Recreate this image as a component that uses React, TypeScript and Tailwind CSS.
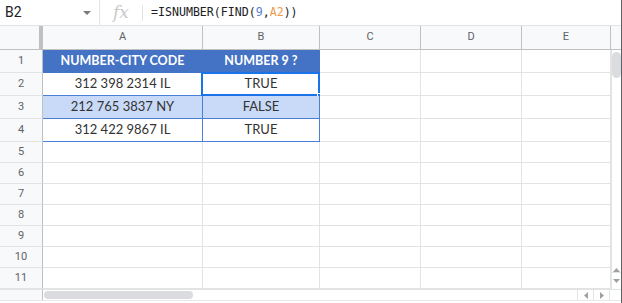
import React from "react";

const cols = [
  { key: "A", w: "w-[160px]" },
  { key: "B", w: "w-[117px]" },
  { key: "C", w: "w-[101px]" },
  { key: "D", w: "w-[101px]" },
  { key: "E", w: "w-[89px]" },
];

const data: Record<number, string[]> = {
  1: ["NUMBER-CITY CODE", "NUMBER 9 ?"],
  2: ["312 398 2314 IL", "TRUE"],
  3: ["212 765 3837 NY", "FALSE"],
  4: ["312 422 9867 IL", "TRUE"],
};

function Row({ n }: { n: number }) {
  const tall = n <= 4;
  const h = tall ? "h-[23px]" : "h-[21px]";
  const vals = data[n] || [];
  return (
    <div className={`flex ${h}`}>
      <div className="w-[43px] shrink-0 border-r border-b border-r-[#c0c0c0] border-b-[#e2e3e3] bg-[#f8f9fa] flex items-center justify-center text-[11px] text-[#5f6368]">
        {n}
      </div>
      {cols.map((c, i) => {
        let cls = "border-r border-b border-[#e2e3e3] bg-white";
        let txt = "";
        if (n === 1 && i < 2) {
          cls = "border-r border-b border-[#4472c4] bg-[#4472c4] text-white font-bold text-[12.5px]";
        } else if (n >= 2 && n <= 4 && i < 2) {
          cls = `border-r border-b border-[#4a7fd8] text-[#333333] text-[13px] ${n === 3 ? "bg-[#c9daf8]" : "bg-white"}`;
        }
        if (i < 2) txt = vals[i] || "";
        return (
          <div
            key={c.key}
            className={`${c.w} shrink-0 relative flex items-center justify-center font-['Lato',sans-serif] ${cls}`}
          >
            {txt}
            {n === 2 && i === 1 && (
              <>
                <div className="absolute left-[-2px] top-[-1px] right-[-1px] bottom-[-1px] border-2 border-[#1a73e8] pointer-events-none" />
                <div className="absolute right-[-4px] bottom-[-4px] w-[6px] h-[6px] bg-[#1a73e8] border border-white" />
              </>
            )}
          </div>
        );
      })}
    </div>
  );
}

export default function App() {
  const rows = [1, 2, 3, 4, 5, 6, 7, 8, 9, 10, 11];
  return (
    <div className="w-[622px] h-[303px] overflow-hidden bg-white font-['Roboto',sans-serif] border-r border-[#5f6368] flex flex-col">
      {/* formula bar */}
      <div className="h-[26px] flex items-center border-b border-[#e2e3e3] shrink-0">
        <div className="w-[100px] h-full flex items-center justify-between pl-[5px] pr-[8px] border-r border-[#e2e3e3] text-[14px] text-[#202124]">
          <span>B2</span>
          <svg width="8" height="4" viewBox="0 0 8 4"><path d="M0 0h8L4 4z" fill="#7a7a7a" /></svg>
        </div>
        <div className="w-[42px] h-full flex items-center justify-center">
          <span className="font-['DejaVu_Serif',serif] italic text-[17px] text-[#c8c8c8]">fx</span>
        </div>
        <div className="w-px h-[16px] bg-[#e2e3e3]" />
        <div className="pl-[8px] text-[11.6px] font-['DejaVu_Sans_Mono',monospace] text-[#202124]">
          =ISNUMBER(FIND(<span className="text-[#5b7fd4]">9</span>,<span className="text-[#f09a4a]">A2</span>))
        </div>
      </div>
      {/* column header */}
      <div className="h-[24px] flex shrink-0 bg-[#f8f9fa] border-b border-[#c0c0c0]">
        <div className="w-[43px] shrink-0 border-r-[4px] border-[#c0c0c0]" />
        {cols.map((c) => (
          <div key={c.key} className={`${c.w} shrink-0 border-r border-[#c0c0c0] flex items-center justify-center text-[11px] text-[#5f6368]`}>
            {c.key}
          </div>
        ))}
        <div className="flex-1" />
      </div>
      {/* body */}
      <div className="flex shrink-0">
        <div className="flex flex-col">
          {rows.map((n) => (
            <Row key={n} n={n} />
          ))}
        </div>
        <div className="flex-1 flex flex-col items-center border-l border-[#e2e3e3] relative">
          <div className="mt-[2px] w-[9px] h-[26px] rounded-full bg-[#dadce0]" />
          <div className="absolute bottom-[17px] left-0 right-0 flex justify-center">
            <svg width="7" height="4" viewBox="0 0 7 4"><path d="M0 4h7L3.5 0z" fill="#a0a0a0" /></svg>
          </div>
          <div className="absolute bottom-[0px] left-0 right-0 h-[17px] border-t border-[#e2e3e3] flex items-center justify-center">
            <svg width="7" height="4" viewBox="0 0 7 4"><path d="M0 0h7L3.5 4z" fill="#a0a0a0" /></svg>
          </div>
        </div>
      </div>
      {/* horizontal scroll */}
      <div className="flex h-[12px] border-t border-[#e2e3e3] border-b border-b-[#e8e8e8] shrink-0">
        <div className="w-[43px] shrink-0 bg-[#f8f9fa] border-r border-[#c0c0c0]" />
        <div className="flex-1 flex items-center pl-[1px]">
          <div className="w-[149px] h-[8px] rounded-full bg-[#dadce0]" />
        </div>
        <div className="w-[16px] border-l border-[#e2e3e3] flex items-center justify-center">
          <svg width="4" height="7" viewBox="0 0 4 7"><path d="M4 0v7L0 3.5z" fill="#a0a0a0" /></svg>
        </div>
        <div className="w-[16px] border-l border-[#e2e3e3] flex items-center justify-center">
          <svg width="4" height="7" viewBox="0 0 4 7"><path d="M0 0v7L4 3.5z" fill="#a0a0a0" /></svg>
        </div>
        <div className="w-[12px] border-l border-[#e2e3e3]" />
      </div>
    </div>
  );
}
